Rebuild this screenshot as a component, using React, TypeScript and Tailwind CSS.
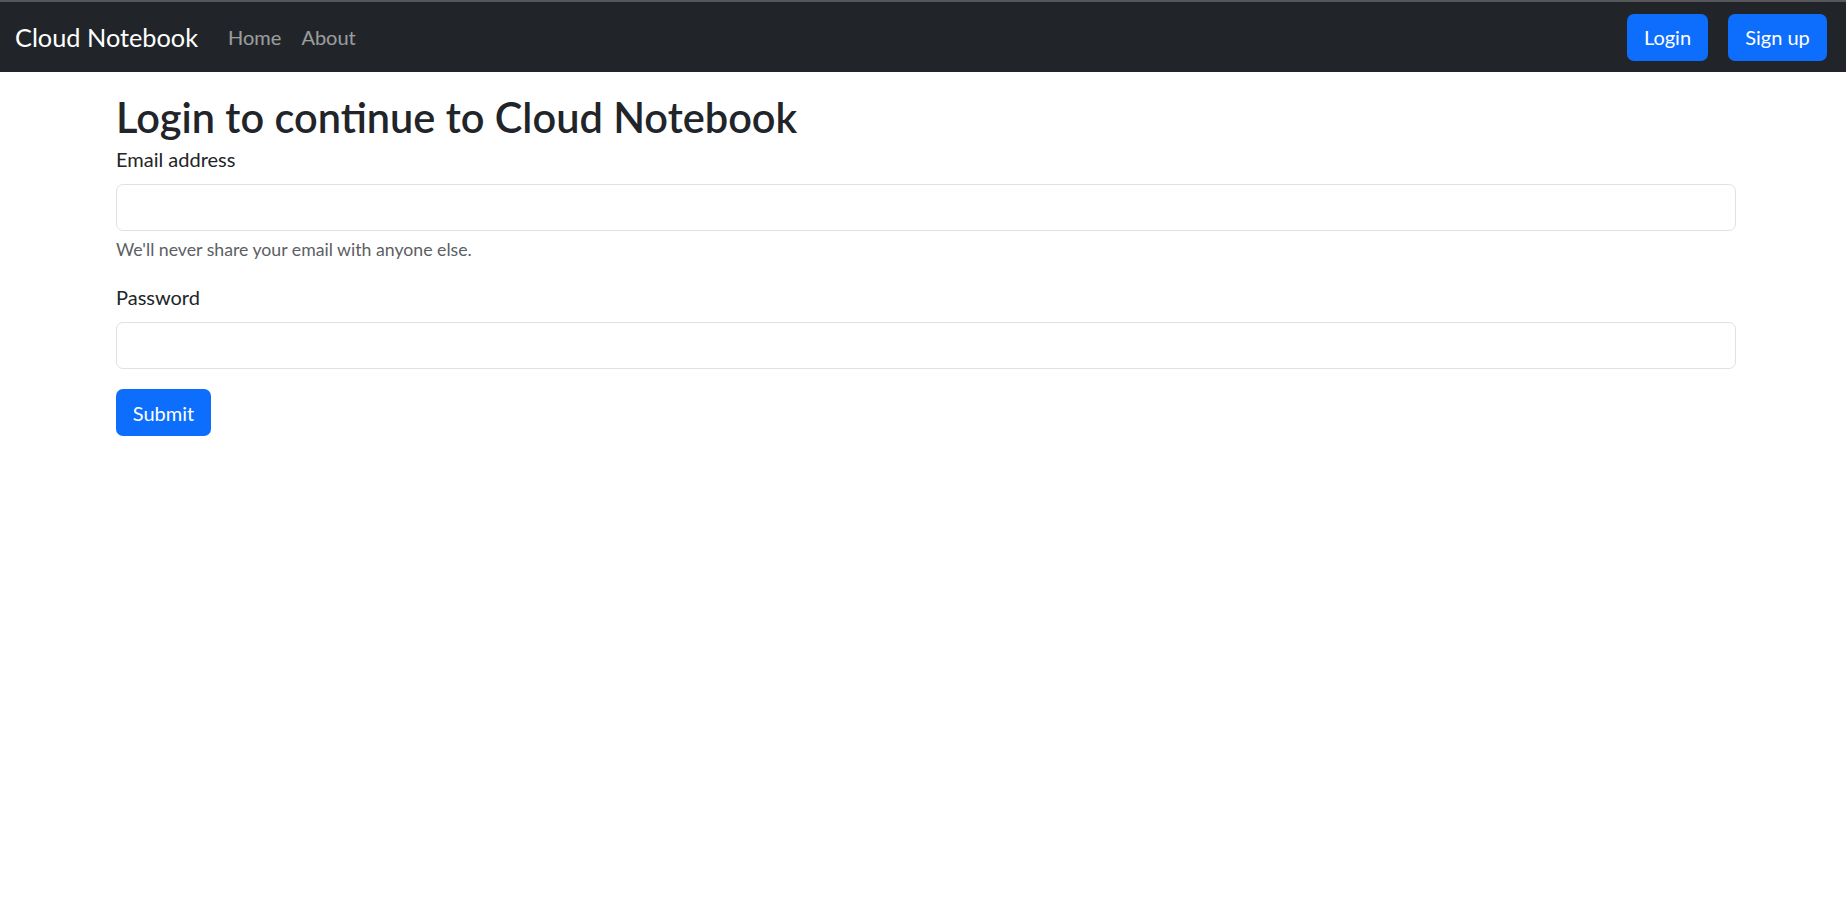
import React from "react";

const font = { fontFamily: 'Lato, "Noto Sans", Arial, sans-serif' };

function Navbar() {
  return (
    <nav className="flex h-[72px] items-center border-t-2 border-[#55575a] bg-[#212529] pl-[15px] pr-[19px]">
      <a href="#" className="mr-[20px] text-[25.3px] leading-[38px] text-white">
        Cloud Notebook
      </a>
      <ul className="flex">
        <li>
          <a href="#" className="px-[10px] text-[20px] leading-[30px] text-white/55">
            Home
          </a>
        </li>
        <li>
          <a href="#" className="px-[10px] text-[20px] leading-[30px] text-white/55">
            About
          </a>
        </li>
      </ul>
      <div className="ml-auto flex gap-[20px]">
        <button className="h-[47px] w-[81px] rounded-[7px] bg-[#0d6efd] text-[20px] text-white">
          Login
        </button>
        <button className="h-[47px] w-[99px] rounded-[7px] bg-[#0d6efd] text-[20px] text-white">
          Sign up
        </button>
      </div>
    </nav>
  );
}

export default function App() {
  return (
    <div className="min-h-screen bg-white text-[#212529]" style={font}>
      <Navbar />
      <main className="ml-[101px] w-[1650px] px-[15px] pt-[20px]">
        <h1 className="text-[41.5px] font-semibold leading-[50px]">Login to continue to Cloud Notebook</h1>
        <form className="mt-[2px]" onSubmit={(e) => e.preventDefault()}>
          <div className="mb-[19px]">
            <label htmlFor="email" className="mb-[10px] block text-[20px] leading-[30px]">
              Email address
            </label>
            <input
              id="email"
              type="email"
              className="block h-[47px] w-full rounded-[7px] border border-[#dee2e6] px-[15px] text-[20px] outline-none"
            />
            <div className="mt-[6px] text-[17.7px] leading-[26px] text-[#5c6064]">
              We'll never share your email with anyone else.
            </div>
          </div>
          <div className="mb-[20px]">
            <label htmlFor="password" className="mb-[10px] block text-[20px] leading-[30px]">
              Password
            </label>
            <input
              id="password"
              type="password"
              className="block h-[47px] w-full rounded-[7px] border border-[#dee2e6] px-[15px] text-[20px] outline-none"
            />
          </div>
          <button type="submit" className="h-[47px] w-[95px] rounded-[7px] bg-[#0d6efd] pt-[1px] text-[20px] text-white">
            Submit
          </button>
        </form>
      </main>
    </div>
  );
}
